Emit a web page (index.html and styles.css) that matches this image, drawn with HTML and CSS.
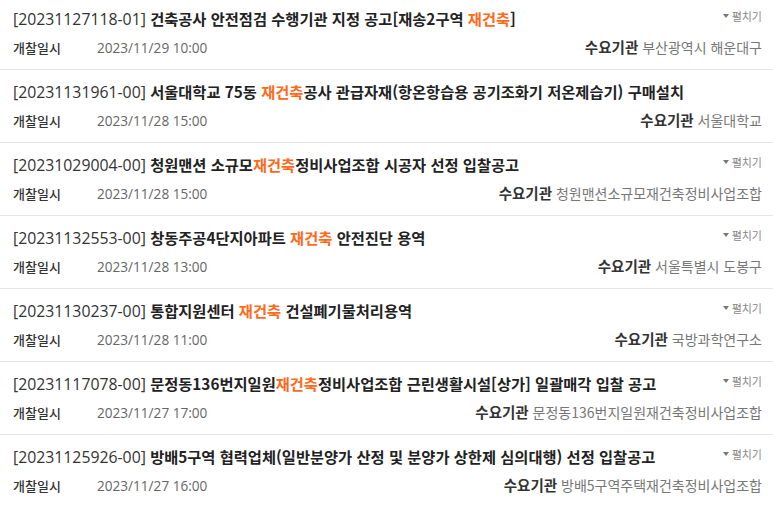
FILE: index.html
```html
<!DOCTYPE html>
<html lang="ko">
<head>
<meta charset="utf-8">
<link rel="stylesheet" href="styles.css">
</head>
<body>
<ul class="list">
  <li class="item">
    <div class="top">
      <p class="title"><span class="no">[20231127118-01]</span> 건축공사 안전점검 수행기관 지정 공고[재송2구역 <em>재건축</em>]</p>
      <span class="toggle"><i class="tri"></i>펼치기</span>
    </div>
    <div class="meta">
      <p><span class="lbl">개찰일시</span><span class="date">2023/11/29 10:00</span></p>
      <p class="org"><b>수요기관</b> 부산광역시 해운대구</p>
    </div>
  </li>
  <li class="item">
    <div class="top">
      <p class="title"><span class="no">[20231131961-00]</span> 서울대학교 75동 <em>재건축</em>공사 관급자재(항온항습용 공기조화기 저온제습기) 구매설치</p>
    </div>
    <div class="meta">
      <p><span class="lbl">개찰일시</span><span class="date">2023/11/28 15:00</span></p>
      <p class="org"><b>수요기관</b> 서울대학교</p>
    </div>
  </li>
  <li class="item">
    <div class="top">
      <p class="title"><span class="no">[20231029004-00]</span> 청원맨션 소규모<em>재건축</em>정비사업조합 시공자 선정 입찰공고</p>
      <span class="toggle"><i class="tri"></i>펼치기</span>
    </div>
    <div class="meta">
      <p><span class="lbl">개찰일시</span><span class="date">2023/11/28 15:00</span></p>
      <p class="org"><b>수요기관</b> 청원맨션소규모재건축정비사업조합</p>
    </div>
  </li>
  <li class="item">
    <div class="top">
      <p class="title"><span class="no">[20231132553-00]</span> 창동주공4단지아파트 <em>재건축</em> 안전진단 용역</p>
      <span class="toggle"><i class="tri"></i>펼치기</span>
    </div>
    <div class="meta">
      <p><span class="lbl">개찰일시</span><span class="date">2023/11/28 13:00</span></p>
      <p class="org"><b>수요기관</b> 서울특별시 도봉구</p>
    </div>
  </li>
  <li class="item">
    <div class="top">
      <p class="title"><span class="no">[20231130237-00]</span> 통합지원센터 <em>재건축</em> 건설폐기물처리용역</p>
      <span class="toggle"><i class="tri"></i>펼치기</span>
    </div>
    <div class="meta">
      <p><span class="lbl">개찰일시</span><span class="date">2023/11/28 11:00</span></p>
      <p class="org"><b>수요기관</b> 국방과학연구소</p>
    </div>
  </li>
  <li class="item">
    <div class="top">
      <p class="title"><span class="no">[20231117078-00]</span> 문정동136번지일원<em>재건축</em>정비사업조합 근린생활시설[상가] 일괄매각 입찰 공고</p>
      <span class="toggle"><i class="tri"></i>펼치기</span>
    </div>
    <div class="meta">
      <p><span class="lbl">개찰일시</span><span class="date">2023/11/27 17:00</span></p>
      <p class="org"><b>수요기관</b> 문정동136번지일원재건축정비사업조합</p>
    </div>
  </li>
  <li class="item">
    <div class="top">
      <p class="title"><span class="no">[20231125926-00]</span> 방배5구역 협력업체(일반분양가 산정 및 분양가 상한제 심의대행) 선정 입찰공고</p>
      <span class="toggle"><i class="tri"></i>펼치기</span>
    </div>
    <div class="meta">
      <p><span class="lbl">개찰일시</span><span class="date">2023/11/27 16:00</span></p>
      <p class="org"><b>수요기관</b> 방배5구역주택재건축정비사업조합</p>
    </div>
  </li>
</ul>
</body>
</html>
```
FILE: styles.css
```css
* { box-sizing: border-box; }
html, body { margin: 0; padding: 0; background: #fff; }
body { font-family: "Noto Sans CJK KR", "Noto Sans", sans-serif; color: #222; }
.list { list-style: none; margin: 0; padding: 0; }
.item {
  padding: 11px 11px 12px 13px;
  border-bottom: 1px solid #e6e6e6;
}
.item:first-child { padding-top: 8px; }
.top { display: flex; justify-content: space-between; align-items: flex-start; height: 20px; }
.title {
  margin: 0;
  font-size: 15.3px;
  line-height: 20px;
  font-weight: 600;
  color: #222;
  white-space: nowrap;
}
.no { font-family: "Open Sans", "Noto Sans", sans-serif; font-size: 15.8px; font-weight: 400; color: #333; }
.title em { font-style: normal; color: #ff6a1a; }
.toggle {
  display: flex; align-items: center; gap: 3px;
  font-size: 11px; line-height: 16px; color: #888;
  white-space: nowrap;
}
.tri {
  display: block; width: 0; height: 0;
  border-left: 3px solid transparent; border-right: 3px solid transparent;
  border-top: 4px solid #777;
}
.meta {
  display: flex; justify-content: space-between; align-items: center;
  margin-top: 9px; height: 20px;
}
.meta p { margin: 0; line-height: 20px; white-space: nowrap; }
.lbl { display: inline-block; width: 84px; font-size: 13px; font-weight: 500; color: #333; }
.date { font-family: "Open Sans", "Noto Sans", sans-serif; font-size: 13.6px; color: #666; }
.org { font-size: 14px; color: #777; }
.org b { font-size: 14.5px; font-weight: 700; color: #333; }
```
